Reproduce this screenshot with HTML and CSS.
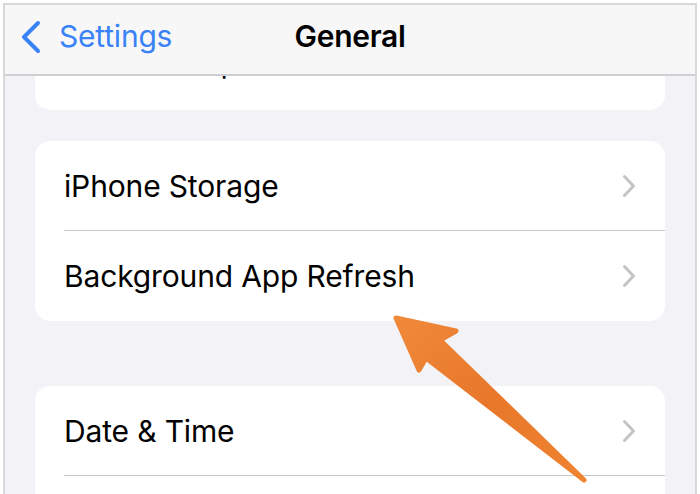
FILE: index.html
```html
<!DOCTYPE html>
<html lang="en">
<head>
<meta charset="UTF-8" />
<title>General</title>
<link rel="stylesheet" href="styles.css">
</head>
<body>

<div class="screen">
    <div class="nav-bar">
        <a class="back-btn" href="#">
            <svg class="back-chevron" width="22" height="34" viewBox="0 0 22 34">
                <path d="M18 3 L4 17 L18 31" fill="none" stroke="#3a82f7" stroke-width="4" stroke-linecap="round" stroke-linejoin="round"/>
            </svg>
            <span>Settings</span>
        </a>
        <div class="nav-title">General</div>
    </div>

    <div class="content">
        <div class="group group-first">
            <div class="row">
                <span class="row-label">Software Update</span>
            </div>
        </div>

        <div class="group group-storage">
            <div class="row">
                <span class="row-label">iPhone Storage</span>
                <svg class="chevron" width="14" height="24" viewBox="0 0 14 24"><path d="M2.5 2.5 L11.5 12 L2.5 21.5" /></svg>
            </div>
            <div class="row">
                <span class="row-label">Background App Refresh</span>
                <svg class="chevron" width="14" height="24" viewBox="0 0 14 24"><path d="M2.5 2.5 L11.5 12 L2.5 21.5" /></svg>
            </div>
        </div>

        <div class="group group-date">
            <div class="row">
                <span class="row-label">Date &amp; Time</span>
                <svg class="chevron" width="14" height="24" viewBox="0 0 14 24"><path d="M2.5 2.5 L11.5 12 L2.5 21.5" /></svg>
            </div>
            <div class="row">
                <span class="row-label">Keyboard</span>
                <svg class="chevron" width="14" height="24" viewBox="0 0 14 24"><path d="M2.5 2.5 L11.5 12 L2.5 21.5" /></svg>
            </div>
        </div>
    </div>

    <!-- seta laranja por cima da lista -->
    <svg class="pointer-arrow" width="700" height="494" viewBox="0 0 700 494">
        <defs>
            <linearGradient id="arrowFill" x1="0" y1="0" x2="1" y2="1">
                <stop offset="0" stop-color="#f0893a"/>
                <stop offset="0.5" stop-color="#e8772a"/>
                <stop offset="1" stop-color="#ef8431"/>
            </linearGradient>
        </defs>
        <path d="M396 318 L456 331 L440 340 L584 480 L426 358 L419 370 Z"
              fill="url(#arrowFill)" stroke="url(#arrowFill)" stroke-width="5" stroke-linejoin="round"/>
    </svg>
</div>

</body>
</html>
```

FILE: styles.css
```css
body {
    margin: 0;
    padding: 0;
    background-color: #ffffff;
    font-family: Inter, 'Liberation Sans', sans-serif;
    color: #000000;
    overflow: hidden;
}

.screen {
    margin: 3px 3px 0 3px;
    height: 520px;
    border: 2px solid #d8d8da;
    border-bottom: none;
    background-color: #f2f2f7;
    position: relative;
    overflow: hidden;
}

/* Barra superior */
.nav-bar {
    position: absolute;
    top: 0;
    left: 0;
    right: 0;
    z-index: 2;
    height: 71px;
    box-sizing: border-box;
    padding-bottom: 8px;
    background-color: #f7f7f7;
    border-bottom: 2px solid #cfcfd1;
    display: flex;
    align-items: center;
    justify-content: center;
}

.back-btn {
    position: absolute;
    left: 15px;
    top: 0;
    bottom: 8px;
    display: flex;
    align-items: center;
    gap: 17px;
    color: #3a82f7;
    text-decoration: none;
    font-size: 30px;
    letter-spacing: -0.2px;
}

.back-chevron {
    margin-top: 2px;
}

.nav-title {
    font-size: 30px;
    font-weight: 600;
    letter-spacing: -0.3px;
}

/* Lista */
.content {
    padding: 16px 30px 0 30px;
}

.group {
    background-color: #ffffff;
    border-radius: 15px;
    overflow: hidden;
}

.group-first .row {
    box-sizing: border-box;
    padding-bottom: 7px;
}

.group-storage {
    margin-top: 31px;
}

.group-date {
    margin-top: 65px;
}

.row {
    height: 89px;
    display: flex;
    align-items: center;
    justify-content: space-between;
    margin-left: 29px;
    padding-right: 29px;
}

.row + .row {
    border-top: 1px solid #c8c8cb;
    height: 90px;
}

.row-label {
    font-size: 30px;
    letter-spacing: -0.15px;
}

.chevron path {
    fill: none;
    stroke: #c4c4c7;
    stroke-width: 3;
    stroke-linecap: round;
    stroke-linejoin: round;
}

.pointer-arrow {
    position: absolute;
    left: -5px;
    top: -5px;
    z-index: 1;
    pointer-events: none;
}
```
